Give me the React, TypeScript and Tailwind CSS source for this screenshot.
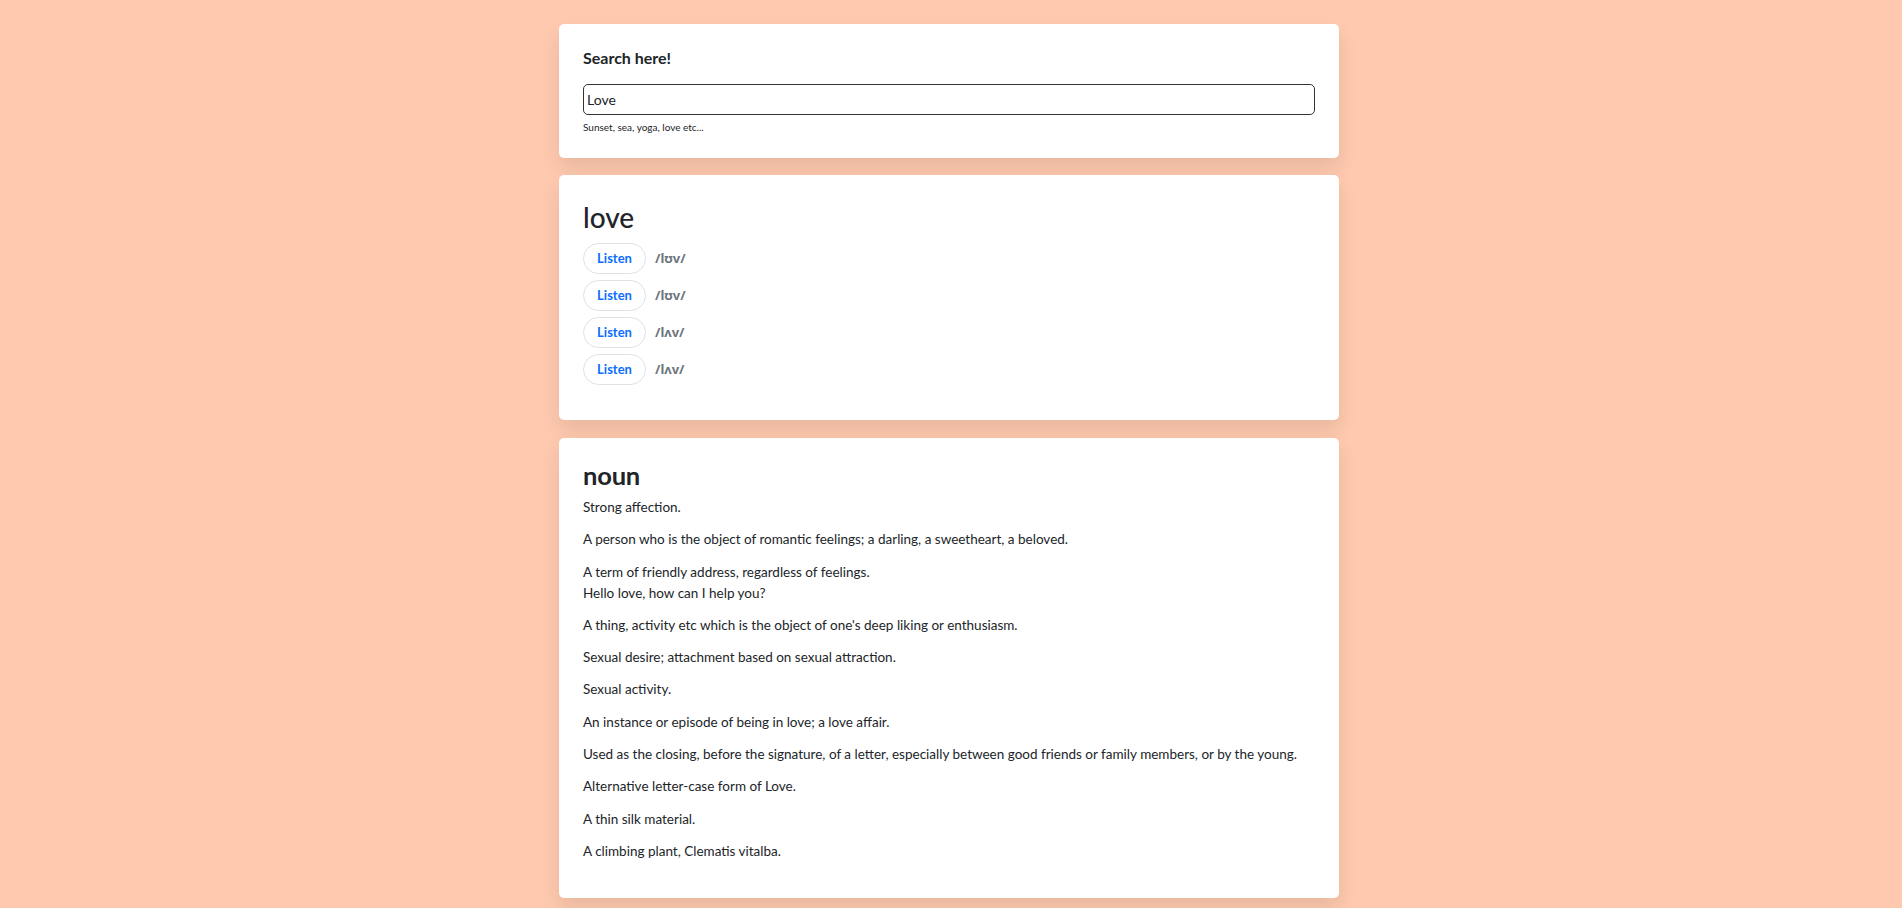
import React from "react";

const pron = ["/lʊv/", "/lʊv/", "/lʌv/", "/lʌv/"];
const defs: string[][] = [
  ["Strong affection."],
  ["A person who is the object of romantic feelings; a darling, a sweetheart, a beloved."],
  ["A term of friendly address, regardless of feelings.", "Hello love, how can I help you?"],
  ["A thing, activity etc which is the object of one's deep liking or enthusiasm."],
  ["Sexual desire; attachment based on sexual attraction."],
  ["Sexual activity."],
  ["An instance or episode of being in love; a love affair."],
  ["Used as the closing, before the signature, of a letter, especially between good friends or family members, or by the young."],
  ["Alternative letter-case form of Love."],
  ["A thin silk material."],
  ["A climbing plant, Clematis vitalba."],
];

export default function App() {
  return (
    <div
      className="min-h-screen w-full bg-[#fec9ae] pt-6 pb-6 pr-[4px] flex flex-col items-center text-[#212529]"
      style={{ fontFamily: 'Lato, "Noto Sans", sans-serif' }}
    >
      <div className="w-[780px] bg-white rounded-[5px] shadow-[0_10px_20px_rgba(0,0,0,0.09)] px-6 pt-6 pb-[23px]">
        <div className="text-[16px] font-bold leading-[20px] mb-4">Search here!</div>
        <input
          readOnly
          value="Love"
          className="block w-full h-[31px] border border-[#333] rounded-[5px] px-[3px] text-[14px] text-[#212529] outline-none"
          style={{ fontFamily: 'Lato, "Noto Sans", sans-serif' }}
        />
        <div className="text-[10px] leading-[15px] mt-[5px]">Sunset, sea, yoga, love etc...</div>
      </div>

      <div className="w-[780px] mt-[17px] bg-white rounded-[5px] shadow-[0_10px_20px_rgba(0,0,0,0.09)] px-6 pt-6 pb-[35px]">
        <h2 className="text-[28px] font-medium leading-[36px] mb-2">love</h2>
        <div className="flex flex-col gap-[6px]">
          {pron.map((p, i) => (
            <div key={i} className="flex items-center">
              <button className="h-[31px] w-[63px] rounded-full border border-[#dee2e6] bg-white text-[#0d6efd] text-[13px] font-bold flex items-center justify-center">
                Listen
              </button>
              <span
                className="ml-[9px] text-[13px] font-bold text-[#6c757d]"
                style={{ fontFamily: '"Noto Sans", sans-serif' }}
              >
                {p}
              </span>
            </div>
          ))}
        </div>
      </div>

      <div className="w-[780px] mt-[18px] bg-white rounded-[5px] shadow-[0_10px_20px_rgba(0,0,0,0.09)] px-6 pt-6 pb-[25px]">
        <h3 className="text-[25.5px] font-bold leading-[27px] mb-2 tracking-[-0.2px]">noun</h3>
        <div>
          {defs.map((d, i) => (
            <p key={i} className="text-[13.5px] leading-[21px] mb-[11.3px]">
              {d.map((line, j) => (
                <React.Fragment key={j}>
                  {j > 0 && <br />}
                  {line}
                </React.Fragment>
              ))}
            </p>
          ))}
        </div>
      </div>
    </div>
  );
}
